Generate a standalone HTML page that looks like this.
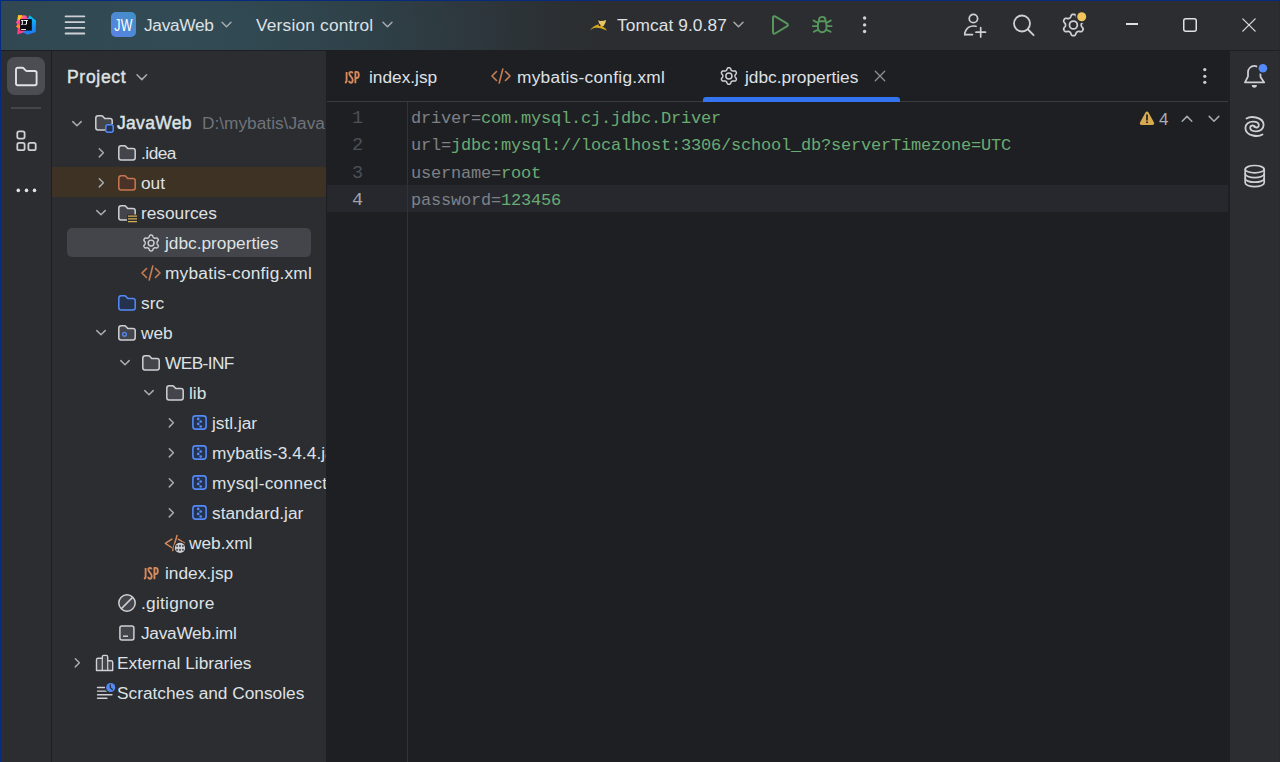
<!DOCTYPE html>
<html><head><meta charset="utf-8">
<style>
*{box-sizing:border-box;margin:0;padding:0}
html,body{width:1280px;height:762px;overflow:hidden;background:#2B2D30}
body{position:relative;font-family:"Liberation Sans",sans-serif;color:#DFE1E5;font-size:17.3px}
.a{position:absolute}
.t{position:absolute;white-space:nowrap;line-height:20px}
svg{position:absolute;overflow:visible}
.g{fill:none;stroke:#CED0D6;stroke-width:1.6;stroke-linecap:round;stroke-linejoin:round}
.ch{fill:none;stroke:#A8ABB0;stroke-width:1.5;stroke-linecap:round;stroke-linejoin:round}
.code{position:absolute;font-family:"Liberation Mono",monospace;font-size:17px;letter-spacing:-0.2px;white-space:pre;line-height:27px}
.ln{position:absolute;font-family:"Liberation Mono",monospace;font-size:18.5px;line-height:27px;color:#4B5059;text-align:right;width:40px}
.k{color:#7E8187}.v{color:#6AAB73}
</style></head><body>
<!-- base panels -->
<div class="a" style="left:0;top:0;width:1280px;height:50px;background:#2B2D30"></div>
<div class="a" style="left:0;top:0;width:1280px;height:50px;background:radial-gradient(ellipse 420px 260px at 190px 40px,rgba(52,86,98,0.55),rgba(52,86,98,0) 100%),linear-gradient(90deg,rgba(50,80,92,0.6) 0px,rgba(50,80,92,0.45) 250px,rgba(50,80,92,0) 540px)"></div>
<div class="a" style="left:0;top:50px;width:1280px;height:1px;background:#1E1F22"></div>
<div class="a" style="left:51px;top:51px;width:1px;height:711px;background:#1E1F22"></div>
<div class="a" style="left:327px;top:51px;width:903px;height:711px;background:#1E1F22"></div>
<div class="a" style="left:327px;top:101px;width:901px;height:1px;background:#393B40"></div>
<div class="a" style="left:327px;top:185px;width:901px;height:27px;background:#26282E"></div>
<div class="a" style="left:407px;top:102px;width:1px;height:660px;background:#313337"></div>
<div class="a" style="left:326px;top:51px;width:1px;height:711px;background:#1E1F22"></div>


<!-- ===== TITLE BAR ===== -->
<!-- IJ logo -->
<svg style="left:14px;top:13px" width="24" height="24" viewBox="0 0 24 24">
  <defs>
    <linearGradient id="lgB" x1="0.5" y1="0" x2="0.3" y2="1"><stop offset="0" stop-color="#07C3F2"/><stop offset="0.5" stop-color="#1A8DF5"/><stop offset="1" stop-color="#1D7CF2"/></linearGradient>
    <linearGradient id="lgP" x1="0.2" y1="0" x2="0.6" y2="1"><stop offset="0" stop-color="#FFC31C"/><stop offset="0.3" stop-color="#FF45A0"/><stop offset="0.6" stop-color="#FF3A7E"/><stop offset="1" stop-color="#FF3D8B"/></linearGradient>
  </defs>
  <path d="M15.4 2.2L22 7.6L21.7 18.9L13.5 21.7L8 19L13 8Z" fill="url(#lgB)"/>
  <path d="M4.1 2.2L12 2.5L14.2 6L12 17L8.5 19.8L3.1 21.4L3.8 15L2.2 13.5L3.5 11.5L1.9 9.4L3.5 7Z" fill="url(#lgP)"/>
  <path d="M2.2 13.5L3.6 11.2L6.5 12L6.5 15.5L3.8 15Z" fill="#FF8C1A"/>
  <path d="M4.1 2.2L8 2.4L6.5 6.5L3.5 7Z" fill="#FFC81F"/>
  <rect x="6.1" y="6.1" width="11.7" height="11.5" fill="#0B0A10"/>
  <g fill="#fff">
    <path d="M7.1 7.1H9.5V8H8.8V10.9H9.5V11.8H7.1V10.9H7.8V8H7.1Z"/>
    <path d="M10.1 7.1H13.9V8H13V10.4C13 11.3 12.4 11.8 11.4 11.8H10.3V10.9H11.2C11.8 10.9 12 10.7 12 10.2V8H10.1Z"/>
    <rect x="7.1" y="16.1" width="4.9" height="0.9"/>
  </g>
</svg>
<!-- hamburger -->
<svg style="left:64px;top:15px" width="22" height="20" viewBox="0 0 22 20">
  <g stroke="#CED0D6" stroke-width="1.9" stroke-linecap="round"><path d="M1.6 1.4H20.3M1.6 7.1H20.3M1.6 12.9H20.3M1.6 18.5H20.3"/></g>
</svg>
<!-- JW badge -->
<div class="a" style="left:111px;top:12px;width:25px;height:25px;border-radius:5px;background:linear-gradient(45deg,#5C82E8,#3E90C2)"></div>
<div class="t" style="left:111px;top:15.5px;width:25px;text-align:center;color:#fff;font-size:16.8px;transform:scaleX(0.74);letter-spacing:0.4px">JW</div>
<div class="t" style="left:144px;top:15px;letter-spacing:-0.3px">JavaWeb</div>
<svg style="left:221px;top:21px" width="12" height="8" viewBox="0 0 12 8"><path class="ch" d="M1 1.3L5.5 5.8L10 1.3"/></svg>
<div class="t" style="left:256px;top:15px;letter-spacing:0.2px">Version control</div>
<svg style="left:382px;top:21px" width="12" height="8" viewBox="0 0 12 8"><path class="ch" d="M1 1.3L5.5 5.8L10 1.3"/></svg>

<!-- tomcat -->
<svg style="left:589px;top:19px" width="19" height="13" viewBox="0 0 19 13">
  <path d="M9.2 0.9L11.5 1.9L14.5 1.7L17 0.4L16.5 3.5L14.8 6.8L13.2 7.8L11.4 6.5L10 4Z" fill="#E6C665"/>
  <path d="M9.2 0.4L11.5 1.4M14.5 1.2L17 0" stroke="#15161a" stroke-width="0.8"/>
  <path d="M0.8 11.2C2.5 9 4.5 7.4 6.5 6.4C8 5.5 9.8 5.1 11 5.7C12.5 6.4 14.2 7.8 15.5 8.7C16.6 9.5 17.4 10.5 18 11.6C16.1 11 14.1 10.2 12.4 9.5C10.4 8.8 8 8.4 6 8.8C4 9.4 2.4 10.2 0.8 11.2Z" fill="#D3A521"/>
  <circle cx="10.6" cy="6.2" r="0.85" fill="#15161a"/>
</svg>
<div class="t" style="left:617px;top:15px;letter-spacing:0.1px">Tomcat 9.0.87</div>
<svg style="left:733px;top:21px" width="12" height="8" viewBox="0 0 12 8"><path class="ch" d="M1 1.3L5.5 5.8L10 1.3"/></svg>
<!-- run -->
<svg style="left:770px;top:14px" width="20" height="22" viewBox="0 0 20 22">
  <path d="M3 3.6 C3 2.4 4.1 1.8 5.1 2.4 L17.2 9.7 C18.1 10.3 18.1 11.6 17.2 12.2 L5.1 19.5 C4.1 20.1 3 19.5 3 18.3 Z" fill="none" stroke="#57965C" stroke-width="2" stroke-linejoin="round"/>
</svg>
<!-- debug -->
<svg style="left:806px;top:10px" width="34" height="30" viewBox="0 0 34 30">
  <g fill="none" stroke="#57965C" stroke-width="1.9" stroke-linecap="round" stroke-linejoin="round">
    <path d="M12.9 11V10.3C12.9 8.1 14.3 6.85 16.2 6.85C18.1 6.85 19.5 8.1 19.5 10.3V11"/>
    <path d="M13.2 11.3H19.2C20.2 12.2 20.6 13.8 20.6 16.5C20.6 19.8 18.8 22.25 16.2 22.25C13.6 22.25 11.8 19.8 11.8 16.5C11.8 13.8 12.2 12.2 13.2 11.3Z"/>
    <path d="M12.3 12.6C10.5 12.3 9 11.5 7.6 10.4M11.8 16.1H6.8M12.3 20C10.5 20.3 9 21 7.8 21.7"/>
    <path d="M20.1 12.6C21.9 12.3 23.4 11.5 24.8 10.4M20.6 16.1H25.6M20.1 20C21.9 20.3 23.4 21 24.6 21.7"/>
  </g>
</svg>
<!-- more -->
<svg style="left:861px;top:15px" width="8" height="20" viewBox="0 0 8 20">
  <g fill="#CED0D6"><circle cx="3.6" cy="3" r="1.7"/><circle cx="3.6" cy="9.9" r="1.7"/><circle cx="3.6" cy="16.5" r="1.7"/></g>
</svg>
<!-- add user -->
<svg style="left:962px;top:12px" width="26" height="26" viewBox="0 0 26 26">
  <g class="g" style="stroke-width:1.7">
    <circle cx="11.4" cy="6.5" r="4.2"/>
    <path d="M2.8 22.6 C2.6 21.8 2.8 20.8 3.2 19.9 C4.6 16.3 7.8 14 11.6 14 C12.4 14 13.2 14.1 14 14.3"/>
    <path d="M2.8 22.6 H10.5"/>
    <path d="M18.7 15.5 V25 M14 20.2 H23.5"/>
  </g>
</svg>
<!-- search -->
<svg style="left:1010px;top:11px" width="28" height="28" viewBox="0 0 28 28">
  <g class="g" style="stroke-width:1.8"><circle cx="12" cy="12.5" r="8"/><path d="M18 18.5 L23.6 24.2"/></g>
</svg>
<!-- settings gear -->
<svg style="left:1058px;top:8px" width="34" height="34" viewBox="0 0 34 34">
  <g class="g" style="stroke-width:1.75"><path d="M23.30 17.00 L23.30 16.72 L23.30 16.45 L23.33 16.17 L23.43 15.87 L23.61 15.55 L23.88 15.20 L24.21 14.80 L24.55 14.38 L24.84 13.93 L25.04 13.49 L25.13 13.07 L25.11 12.68 L25.00 12.32 L24.85 11.98 L24.67 11.65 L24.47 11.33 L24.26 11.03 L24.00 10.75 L23.67 10.54 L23.26 10.40 L22.78 10.36 L22.25 10.39 L21.71 10.47 L21.20 10.56 L20.76 10.61 L20.39 10.61 L20.09 10.55 L19.83 10.44 L19.59 10.30 L19.35 10.16 L19.11 10.02 L18.87 9.89 L18.64 9.72 L18.44 9.49 L18.25 9.17 L18.08 8.75 L17.90 8.27 L17.70 7.76 L17.46 7.29 L17.18 6.89 L16.86 6.61 L16.51 6.43 L16.15 6.34 L15.77 6.31 L15.40 6.30 L15.03 6.31 L14.65 6.34 L14.29 6.43 L13.94 6.61 L13.62 6.89 L13.34 7.29 L13.10 7.76 L12.90 8.27 L12.72 8.75 L12.55 9.17 L12.36 9.49 L12.16 9.72 L11.93 9.89 L11.69 10.02 L11.45 10.16 L11.21 10.30 L10.97 10.44 L10.71 10.55 L10.41 10.61 L10.04 10.61 L9.60 10.56 L9.09 10.47 L8.55 10.39 L8.02 10.36 L7.54 10.40 L7.13 10.54 L6.80 10.75 L6.54 11.03 L6.33 11.33 L6.13 11.65 L5.95 11.98 L5.80 12.32 L5.69 12.68 L5.67 13.07 L5.76 13.49 L5.96 13.93 L6.25 14.38 L6.59 14.80 L6.92 15.20 L7.19 15.55 L7.37 15.87 L7.47 16.17 L7.50 16.45 L7.50 16.72 L7.50 17.00 L7.50 17.28 L7.50 17.55 L7.47 17.83 L7.37 18.13 L7.19 18.45 L6.92 18.80 L6.59 19.20 L6.25 19.62 L5.96 20.07 L5.76 20.51 L5.67 20.93 L5.69 21.32 L5.80 21.68 L5.95 22.02 L6.13 22.35 L6.33 22.67 L6.54 22.97 L6.80 23.25 L7.13 23.46 L7.54 23.60 L8.02 23.64 L8.55 23.61 L9.09 23.53 L9.60 23.44 L10.04 23.39 L10.41 23.39 L10.71 23.45 L10.97 23.56 L11.21 23.70 L11.45 23.84 L11.69 23.98 L11.93 24.11 L12.16 24.28 L12.36 24.51 L12.55 24.83 L12.72 25.25 L12.90 25.73 L13.10 26.24 L13.34 26.71 L13.62 27.11 L13.94 27.39 L14.29 27.57 L14.65 27.66 L15.03 27.69 L15.40 27.70 L15.77 27.69 L16.15 27.66 L16.51 27.57 L16.86 27.39 L17.18 27.11 L17.46 26.71 L17.70 26.24 L17.90 25.73 L18.08 25.25 L18.25 24.83 L18.44 24.51 L18.64 24.28 L18.87 24.11 L19.11 23.98 L19.35 23.84 L19.59 23.70 L19.83 23.56 L20.09 23.45 L20.39 23.39 L20.76 23.39 L21.20 23.44 L21.71 23.53 L22.25 23.61 L22.78 23.64 L23.26 23.60 L23.67 23.46 L24.00 23.25 L24.26 22.97 L24.47 22.67 L24.67 22.35 L24.85 22.02 L25.00 21.68 L25.11 21.32 L25.13 20.93 L25.04 20.51 L24.84 20.07 L24.55 19.62 L24.21 19.20 L23.88 18.80 L23.61 18.45 L23.43 18.13 L23.33 17.83 L23.30 17.55 L23.30 17.28Z"/><circle cx="15.4" cy="17" r="3.95"/></g>
  <circle cx="23.7" cy="8.7" r="6.4" fill="#2B2D30"/>
  <circle cx="23.7" cy="8.7" r="4.5" fill="#F2C55C"/>
</svg>
<!-- window controls -->
<div class="a" style="left:1126px;top:23px;width:12px;height:1.5px;background:#DFE1E5"></div>
<svg style="left:1182px;top:17px" width="16" height="16" viewBox="0 0 16 16"><rect x="1.75" y="1.75" width="12.5" height="12.5" rx="2" fill="none" stroke="#DFE1E5" stroke-width="1.5"/></svg>
<svg style="left:1241px;top:17px" width="16" height="16" viewBox="0 0 16 16"><path d="M1.8 1.8L14.2 14.2M14.2 1.8L1.8 14.2" stroke="#DFE1E5" stroke-width="1.2" stroke-linecap="round"/></svg>

<!-- ===== LEFT STRIP ===== -->
<div class="a" style="left:7px;top:57px;width:38px;height:38px;border-radius:8px;background:#4B4D53"></div>
<svg style="left:14px;top:66px" width="24" height="21" viewBox="0 0 24 21">
  <path class="g" style="stroke:#DFE1E5;stroke-width:1.9" d="M2 3.6 C2 2.5 2.8 1.8 3.8 1.8 H8.3 C8.9 1.8 9.4 2 9.8 2.5 L11.6 4.4 C12 4.8 12.4 5 13 5 H20.8 C21.8 5 22.6 5.8 22.6 6.8 V17.6 C22.6 18.6 21.8 19.3 20.8 19.3 H3.8 C2.8 19.3 2 18.6 2 17.6 Z"/>
</svg>
<div class="a" style="left:11px;top:107px;width:30px;height:2px;background:#43454A"></div>
<svg style="left:14px;top:128px" width="26" height="26" viewBox="0 0 26 26">
  <g class="g" style="stroke-width:1.8">
    <rect x="3.3" y="3.3" width="7.3" height="7.3" rx="1.8"/>
    <rect x="3.3" y="14.9" width="7.3" height="7.3" rx="1.8"/>
    <rect x="14.4" y="14.9" width="7.3" height="7.3" rx="1.8"/>
  </g>
</svg>
<svg style="left:14px;top:185px" width="26" height="10" viewBox="0 0 26 10">
  <g fill="#DFE1E5"><circle cx="4.3" cy="5.4" r="1.8"/><circle cx="12.5" cy="5.4" r="1.8"/><circle cx="20.5" cy="5.4" r="1.8"/></g>
</svg>

<!-- ===== PROJECT PANEL ===== -->
<div class="t" style="left:67px;top:67px;font-size:17.5px;-webkit-text-stroke:0.45px #DFE1E5;letter-spacing:0.7px">Project</div>
<svg style="left:136px;top:73px" width="12" height="9" viewBox="0 0 12 9"><path class="ch" d="M1 1.8L5.8 6.6L10.6 1.8"/></svg>

<div class="a" style="left:0;top:51px;width:326px;height:711px;overflow:hidden">
<div class="a" style="left:0;top:-51px;width:326px;height:762px">
<div class="a" style="left:52px;top:167px;width:274px;height:30px;background:#3D3223"></div>
<div class="a" style="left:67px;top:228px;width:244px;height:29px;border-radius:5px;background:#43454A"></div>

<!-- chevrons -->
<svg style="left:70px;top:118.8px" width="14" height="10" viewBox="0 0 14 10"><path class="ch" d="M2.8 2.6L7 6.8L11.2 2.6"/></svg>
<svg style="left:97px;top:146px" width="10" height="14" viewBox="0 0 10 14"><path class="ch" d="M2.3 2.7L6.4 6.8L2.3 10.9"/></svg>
<svg style="left:97px;top:176px" width="10" height="14" viewBox="0 0 10 14"><path class="ch" d="M2.3 2.7L6.4 6.8L2.3 10.9"/></svg>
<svg style="left:94px;top:208px" width="14" height="10" viewBox="0 0 14 10"><path class="ch" d="M2.8 2.6L7 6.8L11.2 2.6"/></svg>
<svg style="left:94px;top:328px" width="14" height="10" viewBox="0 0 14 10"><path class="ch" d="M2.8 2.6L7 6.8L11.2 2.6"/></svg>
<svg style="left:118px;top:358px" width="14" height="10" viewBox="0 0 14 10"><path class="ch" d="M2.8 2.6L7 6.8L11.2 2.6"/></svg>
<svg style="left:142px;top:388px" width="14" height="10" viewBox="0 0 14 10"><path class="ch" d="M2.8 2.6L7 6.8L11.2 2.6"/></svg>
<svg style="left:167px;top:416px" width="10" height="14" viewBox="0 0 10 14"><path class="ch" d="M2.3 2.7L6.4 6.8L2.3 10.9"/></svg>
<svg style="left:167px;top:446px" width="10" height="14" viewBox="0 0 10 14"><path class="ch" d="M2.3 2.7L6.4 6.8L2.3 10.9"/></svg>
<svg style="left:167px;top:476px" width="10" height="14" viewBox="0 0 10 14"><path class="ch" d="M2.3 2.7L6.4 6.8L2.3 10.9"/></svg>
<svg style="left:167px;top:506px" width="10" height="14" viewBox="0 0 10 14"><path class="ch" d="M2.3 2.7L6.4 6.8L2.3 10.9"/></svg>
<svg style="left:73px;top:656px" width="10" height="14" viewBox="0 0 10 14"><path class="ch" d="M2.3 2.7L6.4 6.8L2.3 10.9"/></svg>

<!-- folder icons -->
<svg width="0" height="0" style="position:absolute">
  <defs>
    <path id="fld" d="M0.8 3.2 C0.8 1.8 1.8 0.8 3.2 0.8 H6.4 C7 0.8 7.5 1 7.9 1.4 L9.3 3 C9.6 3.4 10 3.6 10.5 3.6 H15 C16.3 3.6 17.2 4.6 17.2 5.8 V12.8 C17.2 14.1 16.3 15 15 15 H3 C1.8 15 0.8 14.1 0.8 12.8 Z"/>
  </defs>
</svg>
<!-- root JavaWeb -->
<svg style="left:95px;top:115px" width="20" height="18" viewBox="0 0 20 18">
  <use href="#fld" fill="#43454A" stroke="#CED0D6" stroke-width="1.5"/>
  <rect x="10" y="9" width="9" height="9" rx="2.5" fill="#2B2D30"/>
  <rect x="10.8" y="9.8" width="7.4" height="7.4" rx="2" fill="#25324D" stroke="#548AF7" stroke-width="1.5"/>
</svg>
<svg style="left:118px;top:145px" width="20" height="18" viewBox="0 0 20 18"><use href="#fld" fill="#43454A" stroke="#CED0D6" stroke-width="1.5"/></svg>
<svg style="left:118px;top:175px" width="20" height="18" viewBox="0 0 20 18"><use href="#fld" fill="#4A3229" stroke="#C7774F" stroke-width="1.5"/></svg>
<svg style="left:118px;top:205px" width="20" height="18" viewBox="0 0 20 18">
  <use href="#fld" fill="#43454A" stroke="#CED0D6" stroke-width="1.5"/>
  <rect x="9" y="9.5" width="11" height="8" fill="#2B2D30"/>
  <g stroke="#D6AE58" stroke-width="1.3"><path d="M10 11.2H19M10 13.9H19M10 16.6H19"/></g>
</svg>
<svg style="left:118px;top:295px" width="20" height="18" viewBox="0 0 20 18"><use href="#fld" fill="#25324D" stroke="#548AF7" stroke-width="1.5"/></svg>
<svg style="left:118px;top:325px" width="20" height="18" viewBox="0 0 20 18">
  <use href="#fld" fill="#43454A" stroke="#CED0D6" stroke-width="1.5"/>
  <circle cx="6.5" cy="9.3" r="1.9" fill="none" stroke="#548AF7" stroke-width="1.3"/>
</svg>
<svg style="left:142px;top:355px" width="20" height="18" viewBox="0 0 20 18"><use href="#fld" fill="#43454A" stroke="#CED0D6" stroke-width="1.5"/></svg>
<svg style="left:166px;top:385px" width="20" height="18" viewBox="0 0 20 18"><use href="#fld" fill="#43454A" stroke="#CED0D6" stroke-width="1.5"/></svg>

<!-- properties gear -->
<svg style="left:141px;top:233px" width="20" height="20" viewBox="0 0 20 20">
  <g class="g" style="stroke-width:1.45"><path d="M16.00 10.00 L16.00 9.79 L16.00 9.59 L16.02 9.38 L16.09 9.16 L16.23 8.92 L16.42 8.66 L16.66 8.36 L16.91 8.05 L17.12 7.72 L17.27 7.39 L17.33 7.08 L17.31 6.79 L17.24 6.52 L17.12 6.27 L16.98 6.03 L16.84 5.79 L16.68 5.56 L16.49 5.36 L16.25 5.20 L15.94 5.10 L15.59 5.06 L15.20 5.08 L14.80 5.13 L14.43 5.20 L14.10 5.23 L13.82 5.23 L13.60 5.18 L13.41 5.10 L13.23 5.00 L13.05 4.89 L12.87 4.79 L12.69 4.69 L12.52 4.56 L12.37 4.39 L12.23 4.15 L12.10 3.85 L11.96 3.50 L11.81 3.13 L11.64 2.78 L11.42 2.49 L11.19 2.28 L10.93 2.15 L10.65 2.08 L10.38 2.06 L10.10 2.05 L9.82 2.06 L9.55 2.08 L9.27 2.15 L9.01 2.28 L8.78 2.49 L8.56 2.78 L8.39 3.13 L8.24 3.50 L8.10 3.85 L7.97 4.15 L7.83 4.39 L7.68 4.56 L7.51 4.69 L7.33 4.79 L7.15 4.89 L6.97 5.00 L6.79 5.10 L6.60 5.18 L6.38 5.23 L6.10 5.23 L5.77 5.20 L5.40 5.13 L5.00 5.08 L4.61 5.06 L4.26 5.10 L3.95 5.20 L3.71 5.36 L3.52 5.56 L3.36 5.79 L3.22 6.03 L3.08 6.27 L2.96 6.52 L2.89 6.79 L2.87 7.08 L2.93 7.39 L3.08 7.72 L3.29 8.05 L3.54 8.36 L3.78 8.66 L3.97 8.92 L4.11 9.16 L4.18 9.38 L4.20 9.59 L4.20 9.79 L4.20 10.00 L4.20 10.21 L4.20 10.41 L4.18 10.62 L4.11 10.84 L3.97 11.08 L3.78 11.34 L3.54 11.64 L3.29 11.95 L3.08 12.28 L2.93 12.61 L2.87 12.92 L2.89 13.21 L2.96 13.48 L3.08 13.73 L3.22 13.98 L3.36 14.21 L3.52 14.44 L3.71 14.64 L3.95 14.80 L4.26 14.90 L4.61 14.94 L5.00 14.92 L5.40 14.87 L5.77 14.80 L6.10 14.77 L6.38 14.77 L6.60 14.82 L6.79 14.90 L6.97 15.00 L7.15 15.11 L7.33 15.21 L7.51 15.31 L7.68 15.44 L7.83 15.61 L7.97 15.85 L8.10 16.15 L8.24 16.50 L8.39 16.87 L8.56 17.22 L8.78 17.51 L9.01 17.72 L9.27 17.85 L9.55 17.92 L9.82 17.94 L10.10 17.95 L10.38 17.94 L10.65 17.92 L10.93 17.85 L11.19 17.72 L11.42 17.51 L11.64 17.22 L11.81 16.87 L11.96 16.50 L12.10 16.15 L12.23 15.85 L12.37 15.61 L12.52 15.44 L12.69 15.31 L12.87 15.21 L13.05 15.11 L13.23 15.00 L13.41 14.90 L13.60 14.82 L13.82 14.77 L14.10 14.77 L14.43 14.80 L14.80 14.87 L15.20 14.92 L15.59 14.94 L15.94 14.90 L16.25 14.80 L16.49 14.64 L16.68 14.44 L16.84 14.21 L16.98 13.98 L17.12 13.73 L17.24 13.48 L17.31 13.21 L17.33 12.92 L17.27 12.61 L17.12 12.28 L16.91 11.95 L16.66 11.64 L16.42 11.34 L16.23 11.08 L16.09 10.84 L16.02 10.62 L16.00 10.41 L16.00 10.21Z"/><circle cx="10.1" cy="10" r="2.9"/></g>
</svg>
<!-- xml icon -->
<svg style="left:141px;top:265px" width="22" height="17" viewBox="0 0 22 17">
  <g fill="none" stroke="#C77D55" stroke-width="1.6" stroke-linecap="round" stroke-linejoin="round"><path d="M5.5 3.5L1 8L5.5 12.5M14.5 3.5L19 8L14.5 12.5M11.8 1L8.2 15"/></g>
</svg>
<!-- jar icons -->
<svg width="0" height="0" style="position:absolute"><defs>
<g id="jar"><rect x="0.9" y="0.9" width="13.2" height="13.2" rx="2.6" fill="#25324D" stroke="#548AF7" stroke-width="1.6"/><g fill="#548AF7"><circle cx="6.2" cy="3.9" r="1.35"/><circle cx="8.7" cy="6.5" r="1.35"/><circle cx="6.2" cy="8.9" r="1.35"/><circle cx="8.7" cy="11.5" r="1.35"/></g></g>
</defs></svg>
<svg style="left:191.6px;top:415.3px" width="15" height="15" viewBox="0 0 15 15"><use href="#jar"/></svg>
<svg style="left:191.6px;top:445.3px" width="15" height="15" viewBox="0 0 15 15"><use href="#jar"/></svg>
<svg style="left:191.6px;top:475.3px" width="15" height="15" viewBox="0 0 15 15"><use href="#jar"/></svg>
<svg style="left:191.6px;top:505.3px" width="15" height="15" viewBox="0 0 15 15"><use href="#jar"/></svg>
<!-- web.xml -->
<svg style="left:164px;top:534px" width="22" height="20" viewBox="0 0 22 20">
  <g fill="none" stroke="#D98A5C" stroke-width="1.45" stroke-linecap="round" stroke-linejoin="round"><path d="M7.9 5.1L1.3 9.4L7.6 13.5M14.2 5.2L20.5 9.2M13 1.5L8.7 16.5"/></g>
  <circle cx="16" cy="13.9" r="6.5" fill="#2B2D30"/>
  <circle cx="16" cy="13.9" r="5.1" fill="#CED0D6"/>
  <g fill="#3A3C40"><rect x="12.4" y="11" width="1.4" height="2.1" rx="0.5"/><rect x="15.3" y="10.7" width="1.4" height="2.4" rx="0.5"/><rect x="18.2" y="11" width="1.4" height="2.1" rx="0.5"/><rect x="12.4" y="14.7" width="1.4" height="2.1" rx="0.5"/><rect x="15.3" y="14.7" width="1.4" height="2.4" rx="0.5"/><rect x="18.2" y="14.7" width="1.4" height="2.1" rx="0.5"/></g>
</svg>
<!-- JSP text icons -->
<svg style="left:143px;top:567px" width="16" height="13" viewBox="0 0 16 13"><g fill="none" stroke="#D98A5C" stroke-width="1.85" stroke-linecap="butt" stroke-linejoin="round"><path d="M2.6 0.9V9.6C2.6 10.8 2 11.6 0.9 11.7"/><path d="M8.6 2.4C8.5 1.4 7.9 0.9 7 0.9C6 0.9 5.3 1.5 5.3 2.6C5.3 3.7 6 4.5 7 5.6C8 6.7 8.7 7.5 8.7 9C8.7 10.5 8 11.7 7 11.7C6 11.7 5.2 11.1 5.2 9.8"/><path d="M11.4 12.2V0.9H12.6C14 0.9 14.8 1.8 14.8 3.9C14.8 6 14 7 12.6 7H11.4"/></g></svg>
<!-- gitignore -->
<svg style="left:117px;top:593px" width="20" height="20" viewBox="0 0 20 20">
  <circle cx="10" cy="10" r="8.2" fill="#43454A" stroke="#CED0D6" stroke-width="1.5"/>
  <path d="M4.4 15.6L15.6 4.4" stroke="#CED0D6" stroke-width="1.5"/>
</svg>
<!-- iml -->
<svg style="left:118px;top:624px" width="18" height="18" viewBox="0 0 18 18">
  <rect x="1.9" y="1.9" width="14" height="14.2" rx="2" fill="#43454A" stroke="#CED0D6" stroke-width="1.5"/>
  <path d="M5 12.2H10" stroke="#CED0D6" stroke-width="1.5"/>
</svg>
<!-- External libraries -->
<svg style="left:95px;top:654px" width="19" height="18" viewBox="0 0 19 18">
  <path d="M1.5 16.5V5.8Q1.5 4.3 3 4.3H7.3V2.9Q7.3 1.4 8.8 1.4H11.2Q12.7 1.4 12.7 2.9V6.8H16.2Q17.7 6.8 17.7 8.3V16.5Z" fill="#43454A" stroke="#CED0D6" stroke-width="1.4" stroke-linejoin="round"/>
  <path d="M7.3 4.3V16.5M12.7 6.8V16.5" stroke="#CED0D6" stroke-width="1.2"/>
</svg>
<!-- scratches -->
<svg style="left:95.5px;top:682px" width="20" height="20" viewBox="0 0 20 20">
  <g stroke="#CED0D6" stroke-width="1.4" stroke-linecap="round"><path d="M1.5 5.5H8.5M1.5 9.1H10.5M1.5 12.8H16M1.5 16.3H11"/></g>
  <circle cx="14.7" cy="5.5" r="5.6" fill="#2B2D30"/>
  <circle cx="14.7" cy="5.5" r="4.5" fill="#548AF7"/>
  <path d="M14.3 2.8V5.8L16.4 7.5" stroke="#2B2D30" stroke-width="1.2" fill="none" stroke-linecap="round"/>
</svg>

<!-- tree text -->
<div class="t" style="left:117px;top:112.6px;font-size:17.5px;-webkit-text-stroke:0.45px #DFE1E5;letter-spacing:0.3px">JavaWeb</div>
<div class="t" style="left:202px;top:112.6px;color:#6F737A">D:\mybatis\Java</div>
<div class="t" style="left:141px;top:142.6px;letter-spacing:-0.5px">.idea</div>
<div class="t" style="left:141px;top:172.6px">out</div>
<div class="t" style="left:141px;top:202.6px">resources</div>
<div class="t" style="left:165px;top:232.6px">jdbc.properties</div>
<div class="t" style="left:165px;top:262.6px;letter-spacing:0.22px">mybatis-config.xml</div>
<div class="t" style="left:141px;top:292.6px">src</div>
<div class="t" style="left:141px;top:322.6px">web</div>
<div class="t" style="left:165px;top:352.6px;letter-spacing:-0.6px">WEB-INF</div>
<div class="t" style="left:189px;top:382.6px">lib</div>
<div class="t" style="left:212px;top:412.6px">jstl.jar</div>
<div class="t" style="left:212px;top:442.6px;letter-spacing:0.05px">mybatis-3.4.4.jar</div>
<div class="t" style="left:212px;top:472.6px;letter-spacing:0.3px">mysql-connector-j</div>
<div class="t" style="left:212px;top:502.6px">standard.jar</div>
<div class="t" style="left:189px;top:532.6px">web.xml</div>
<div class="t" style="left:165px;top:562.6px">index.jsp</div>
<div class="t" style="left:141px;top:592.6px;letter-spacing:0.25px">.gitignore</div>
<div class="t" style="left:141px;top:622.6px;letter-spacing:-0.28px">JavaWeb.iml</div>
<div class="t" style="left:117px;top:652.6px">External Libraries</div>
<div class="t" style="left:117px;top:682.6px">Scratches and Consoles</div>
</div></div>

<!-- ===== EDITOR TABS ===== -->
<svg style="left:344px;top:70.5px" width="16" height="13" viewBox="0 0 16 13"><g fill="none" stroke="#D98A5C" stroke-width="1.85" stroke-linecap="butt" stroke-linejoin="round"><path d="M2.6 0.9V9.6C2.6 10.8 2 11.6 0.9 11.7"/><path d="M8.6 2.4C8.5 1.4 7.9 0.9 7 0.9C6 0.9 5.3 1.5 5.3 2.6C5.3 3.7 6 4.5 7 5.6C8 6.7 8.7 7.5 8.7 9C8.7 10.5 8 11.7 7 11.7C6 11.7 5.2 11.1 5.2 9.8"/><path d="M11.4 12.2V0.9H12.6C14 0.9 14.8 1.8 14.8 3.9C14.8 6 14 7 12.6 7H11.4"/></g></svg>
<div class="t" style="left:369px;top:66.6px">index.jsp</div>
<svg style="left:491px;top:68px" width="22" height="17" viewBox="0 0 22 17">
  <g fill="none" stroke="#C77D55" stroke-width="1.6" stroke-linecap="round" stroke-linejoin="round"><path d="M5.5 3.5L1 8L5.5 12.5M14.5 3.5L19 8L14.5 12.5M11.8 1L8.2 15"/></g>
</svg>
<div class="t" style="left:517px;top:66.6px;letter-spacing:0.28px">mybatis-config.xml</div>
<svg style="left:719px;top:66px" width="20" height="20" viewBox="0 0 20 20">
  <g class="g" style="stroke-width:1.5"><path d="M16.00 10.00 L16.00 9.79 L16.00 9.57 L16.02 9.36 L16.10 9.13 L16.24 8.88 L16.45 8.61 L16.70 8.30 L16.96 7.98 L17.18 7.63 L17.34 7.29 L17.40 6.97 L17.39 6.67 L17.30 6.39 L17.18 6.13 L17.04 5.88 L16.90 5.63 L16.73 5.39 L16.53 5.18 L16.28 5.02 L15.96 4.91 L15.59 4.88 L15.18 4.90 L14.77 4.96 L14.38 5.03 L14.04 5.07 L13.75 5.07 L13.52 5.02 L13.32 4.93 L13.13 4.83 L12.95 4.72 L12.76 4.61 L12.58 4.51 L12.40 4.38 L12.24 4.20 L12.10 3.95 L11.97 3.63 L11.83 3.26 L11.68 2.88 L11.49 2.51 L11.27 2.21 L11.03 1.99 L10.76 1.85 L10.47 1.78 L10.19 1.76 L9.90 1.75 L9.61 1.76 L9.33 1.78 L9.04 1.85 L8.77 1.99 L8.53 2.21 L8.31 2.51 L8.12 2.88 L7.97 3.26 L7.83 3.63 L7.70 3.95 L7.56 4.20 L7.40 4.38 L7.22 4.51 L7.04 4.61 L6.85 4.72 L6.67 4.83 L6.48 4.93 L6.28 5.02 L6.05 5.07 L5.76 5.07 L5.42 5.03 L5.03 4.96 L4.62 4.90 L4.21 4.88 L3.84 4.91 L3.52 5.02 L3.27 5.18 L3.07 5.39 L2.90 5.63 L2.76 5.88 L2.62 6.13 L2.50 6.39 L2.41 6.67 L2.40 6.97 L2.46 7.29 L2.62 7.63 L2.84 7.98 L3.10 8.30 L3.35 8.61 L3.56 8.88 L3.70 9.13 L3.78 9.36 L3.80 9.57 L3.80 9.79 L3.80 10.00 L3.80 10.21 L3.80 10.43 L3.78 10.64 L3.70 10.87 L3.56 11.12 L3.35 11.39 L3.10 11.70 L2.84 12.02 L2.62 12.37 L2.46 12.71 L2.40 13.03 L2.41 13.33 L2.50 13.61 L2.62 13.87 L2.76 14.12 L2.90 14.37 L3.07 14.61 L3.27 14.82 L3.52 14.98 L3.84 15.09 L4.21 15.12 L4.62 15.10 L5.03 15.04 L5.42 14.97 L5.76 14.93 L6.05 14.93 L6.28 14.98 L6.48 15.07 L6.67 15.17 L6.85 15.28 L7.04 15.39 L7.22 15.49 L7.40 15.62 L7.56 15.80 L7.70 16.05 L7.83 16.37 L7.97 16.74 L8.12 17.12 L8.31 17.49 L8.53 17.79 L8.77 18.01 L9.04 18.15 L9.33 18.22 L9.61 18.24 L9.90 18.25 L10.19 18.24 L10.47 18.22 L10.76 18.15 L11.03 18.01 L11.27 17.79 L11.49 17.49 L11.68 17.12 L11.83 16.74 L11.97 16.37 L12.10 16.05 L12.24 15.80 L12.40 15.62 L12.58 15.49 L12.76 15.39 L12.95 15.28 L13.13 15.17 L13.32 15.07 L13.52 14.98 L13.75 14.93 L14.04 14.93 L14.38 14.97 L14.77 15.04 L15.18 15.10 L15.59 15.12 L15.96 15.09 L16.28 14.98 L16.53 14.82 L16.73 14.61 L16.90 14.37 L17.04 14.13 L17.18 13.87 L17.30 13.61 L17.39 13.33 L17.40 13.03 L17.34 12.71 L17.18 12.37 L16.96 12.02 L16.70 11.70 L16.45 11.39 L16.24 11.12 L16.10 10.87 L16.02 10.64 L16.00 10.43 L16.00 10.21Z"/><circle cx="9.9" cy="10" r="3.05"/></g>
</svg>
<div class="t" style="left:745px;top:66.6px">jdbc.properties</div>
<svg style="left:874px;top:70px" width="12" height="12" viewBox="0 0 12 12"><path d="M1.3 1.3L10.7 10.7M10.7 1.3L1.3 10.7" stroke="#8C8F94" stroke-width="1.3" stroke-linecap="round"/></svg>
<div class="a" style="left:703px;top:97px;width:197px;height:5px;border-radius:3px 3px 0 0;background:#3574F0"></div>
<svg style="left:1201px;top:66px" width="8" height="20" viewBox="0 0 8 20">
  <g fill="#CED0D6"><circle cx="3.8" cy="3.6" r="1.6"/><circle cx="3.8" cy="10.3" r="1.6"/><circle cx="3.8" cy="16.3" r="1.6"/></g>
</svg>

<!-- ===== EDITOR CONTENT ===== -->
<div class="ln" style="left:323px;top:104.8px">1</div>
<div class="ln" style="left:323px;top:132px">2</div>
<div class="ln" style="left:323px;top:159.8px">3</div>
<div class="ln" style="left:323px;top:186.8px;color:#A1A3AB">4</div>
<div class="code" style="left:411px;top:104.8px"><span class="k">driver=</span><span class="v">com.mysql.cj.jdbc.Driver</span></div>
<div class="code" style="left:411px;top:132px"><span class="k">url=</span><span class="v">jdbc:mysql://localhost:3306/school_db?serverTimezone=UTC</span></div>
<div class="code" style="left:411px;top:159.8px"><span class="k">username=</span><span class="v">root</span></div>
<div class="code" style="left:411px;top:186.8px"><span class="k">password=</span><span class="v">123456</span></div>

<!-- warnings -->
<svg style="left:1138px;top:110px" width="18" height="17" viewBox="0 0 18 17">
  <path d="M7.6 2.3C8.2 1.2 9.8 1.2 10.4 2.3L16 12.6C16.6 13.7 15.9 15 14.6 15H3.4C2.1 15 1.4 13.7 2 12.6Z" fill="#D7AA50"/>
  <path d="M9 5.2V9.8" stroke="#1E1F22" stroke-width="1.7" stroke-linecap="round"/>
  <circle cx="9" cy="12.3" r="0.95" fill="#1E1F22"/>
</svg>
<div class="t" style="left:1159px;top:110px;color:#A8ADB8;font-size:17px">4</div>
<svg style="left:1180px;top:114px" width="14" height="10" viewBox="0 0 14 10"><path class="ch" d="M2.2 7.2L7 2.4L11.8 7.2"/></svg>
<svg style="left:1207px;top:114px" width="14" height="10" viewBox="0 0 14 10"><path class="ch" d="M2.2 2.4L7 7.2L11.8 2.4"/></svg>

<!-- ===== RIGHT STRIP ===== -->
<svg style="left:1242px;top:62px" width="26" height="28" viewBox="0 0 26 28">
  <g class="g" style="stroke-width:1.75">
    <path d="M6 14.4V10.2A6.25 6.3 0 0 1 18.5 10.2V14.9L22.2 20.4H3L6 14.4Z"/>
  </g>
  <path d="M9.8 23H14.9A2.55 2.7 0 0 1 9.8 23Z" fill="#CED0D6"/>
  <circle cx="20.9" cy="6.2" r="6" fill="#2B2D30"/>
  <circle cx="20.9" cy="6.2" r="4.3" fill="#548AF7"/>
</svg>
<svg style="left:1240px;top:112px" width="30" height="30" viewBox="0 0 30 30">
  <g class="g" style="stroke-width:1.8">
    <path d="M6.5 6.5C9 5 13 4.8 16 5.5C20.5 6.5 23.6 9.5 23.6 13C23.6 17 20 19.5 15.7 19.3C12.5 19.2 10.2 17.8 10.2 15.8C10.2 14 11.8 13.2 13.4 13.6C14.5 13.9 15 14.3 15 14.6"/>
    <path d="M22.5 22.5C20 24 16 24.2 13 23.5C8.5 22.5 5.4 19.5 5.4 16C5.4 12 9 9.5 13.3 9.7C16.5 9.8 18.8 11.2 18.8 13.2C18.8 15 17.2 15.8 15.6 15.4C14.5 15.1 14 14.7 14 14.4"/>
  </g>
</svg>
<svg style="left:1242px;top:163px" width="26" height="27" viewBox="0 0 26 27">
  <g class="g" style="stroke-width:1.7">
    <ellipse cx="12.7" cy="6.2" rx="9.5" ry="3.7"/>
    <path d="M3.2 6.2 V19.8 C3.2 21.9 7.4 23.6 12.7 23.6 C18 23.6 22.2 21.9 22.2 19.8 V6.2"/>
    <path d="M3.2 10.8 C3.2 12.9 7.4 14.6 12.7 14.6 C18 14.6 22.2 12.9 22.2 10.8"/>
    <path d="M3.2 15.4 C3.2 17.5 7.4 19.2 12.7 19.2 C18 19.2 22.2 17.5 22.2 15.4"/>
  </g>
</svg>

<!-- window border -->
<div class="a" style="left:0;top:0;width:1280px;height:1px;background:#062B7E"></div>
<div class="a" style="left:0;top:0;width:1px;height:762px;background:#062B7E"></div>
<div class="a" style="left:1279px;top:0;width:1px;height:762px;background:#062B7E"></div>
</body></html>
